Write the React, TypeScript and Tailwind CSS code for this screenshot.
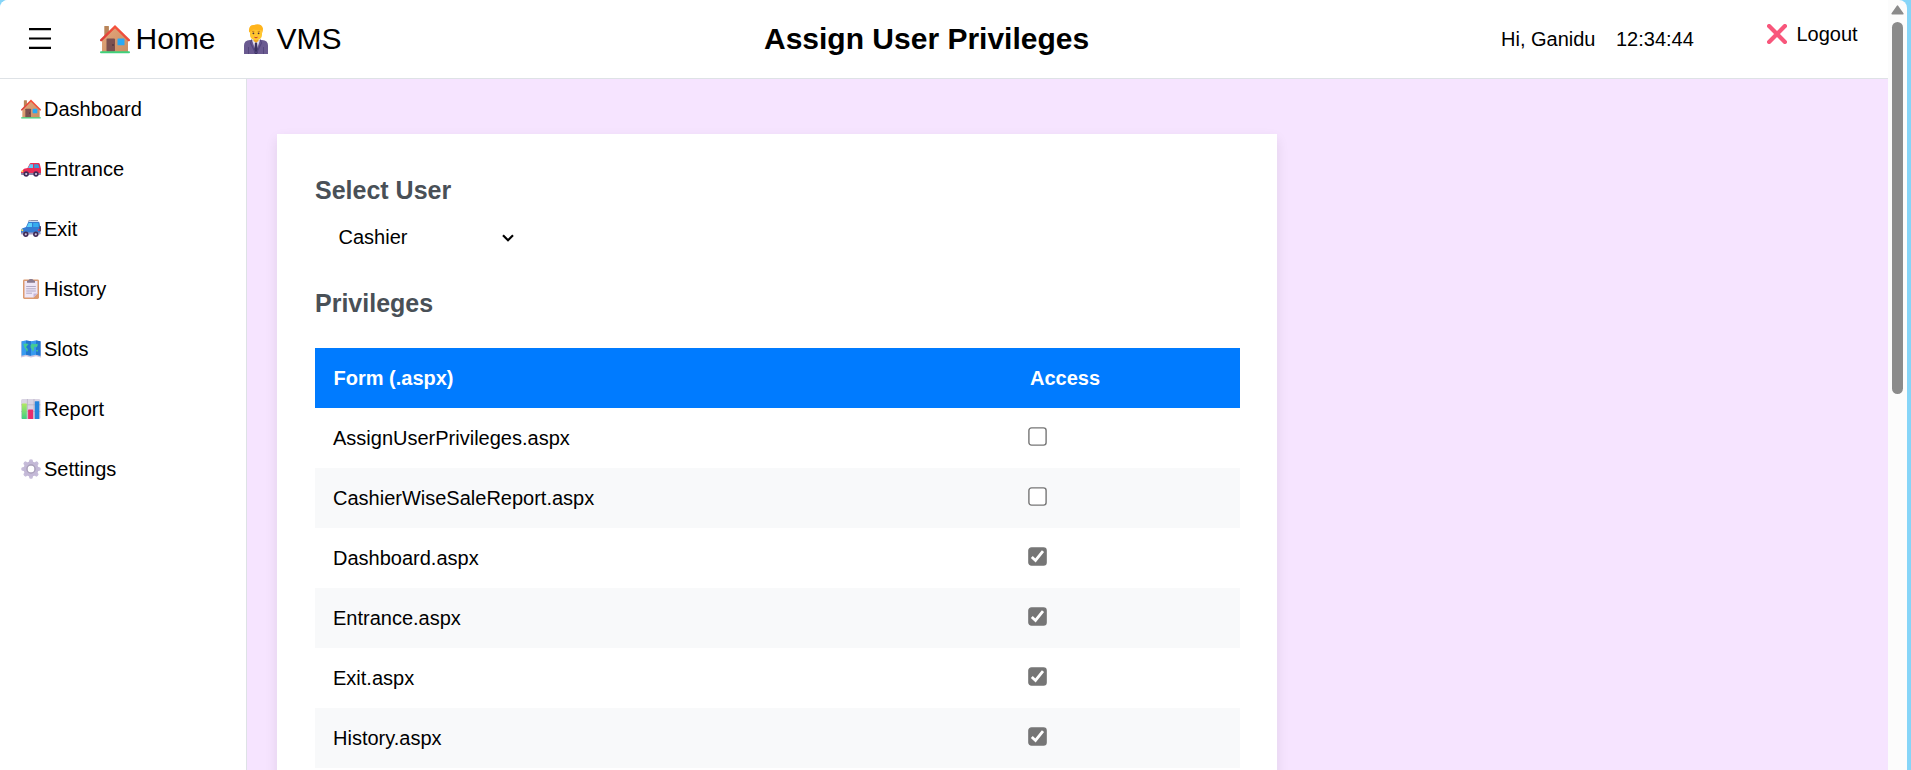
import type { ReactNode } from "react";

function House({ className }: { className: string }) {
  return (
    <svg viewBox="0 0 30 30" className={className}>
      <defs>
        <linearGradient id="wall" x1="0" y1="0" x2="1" y2="1">
          <stop offset="0" stopColor="#e5a77c" />
          <stop offset="1" stopColor="#c98e63" />
        </linearGradient>
        <linearGradient id="roof" x1="0" y1="1" x2="1" y2="0">
          <stop offset="0" stopColor="#d83c3a" />
          <stop offset="1" stopColor="#ff5a3d" />
        </linearGradient>
      </defs>
      <rect x="4.3" y="2" width="4.6" height="11" rx="0.6" fill="#b98559" />
      <path d="M2 15 15 3 28 15V28H2Z" fill="url(#wall)" />
      <path d="M1.2 16.2 15 2.6 28.8 16.2" fill="none" stroke="url(#roof)" strokeWidth="2.4" strokeLinecap="round" />
      <rect x="6.5" y="14.5" width="8.5" height="13" rx="1" fill="#7b5050" />
      <circle cx="13" cy="21" r="0.8" fill="#3d2630" />
      <rect x="17.5" y="14.5" width="7" height="6.8" rx="0.6" fill="#28a9f5" />
      <rect x="0" y="27.3" width="30" height="2" rx="1" fill="#3fd17b" />
    </svg>
  );
}

function OfficeWorker({ className }: { className: string }) {
  return (
    <svg viewBox="0 0 24 30" className={className}>
      <path d="M0 30V21.5Q0 16.3 6 16H18Q24 16.3 24 21.5V30Z" fill="#6a5a90" />
      <path d="M4.5 23V30M19.5 23V30" stroke="#51437a" strokeWidth="0.8" />
      <path d="M8 16 12 28 16 16Z" fill="#e3def0" />
      <path d="M11 18.5H13L14 27.5 13 30H11L10 27.5Z" fill="#3b3260" />
      <path d="M8 15.5 6.5 19 11.5 29M16 15.5 17.5 19 12.5 29" fill="none" stroke="#544680" strokeWidth="1.2" />
      <path d="M9.5 14H14.5V17L12 18.8 9.5 17Z" fill="#f2a71f" />
      <rect x="6" y="3.5" width="12" height="12.5" rx="5" fill="#ffc62e" />
      <path d="M5.2 8.5C4 3 7 .5 10 1 14-.8 18.5.8 19 4.5 19 6 18.6 8 18.2 9L17 6 9 5.6 6.8 7.5Z" fill="#ffb41c" />
      <path d="M8 7.4H10.3M13.7 7.4H16" stroke="#c7791c" strokeWidth="0.8" />
      <circle cx="9.4" cy="9.3" r="0.9" fill="#4b3040" />
      <circle cx="14.6" cy="9.3" r="0.9" fill="#4b3040" />
      <path d="M10.5 13.3Q12 14.3 13.5 13.3" stroke="#c0303a" strokeWidth="1" fill="none" />
    </svg>
  );
}

function RedCar() {
  return (
    <svg viewBox="0 0 20 20" className="size-5">
      <path d="M1 12 3 9.7 6.5 9 8.6 5Q9 4 10 4H17.5Q18.5 4 18.8 5L20 10V14.5Q20 15.5 19 15.5H1Q0 15.5 0 14.5V13Z" fill="#ea2c56" />
      <path d="M7 9 9 5.2H12V9Z" fill="#5ccbfa" />
      <path d="M13.2 5.2H17.2L18.5 9H13.2Z" fill="#3999d8" />
      <path d="M0 14H20V15Q20 16 19 16H1Q0 16 0 15Z" fill="#8c83a8" />
      <circle cx="1.3" cy="12.2" r="1" fill="#ffd54d" />
      <circle cx="5.2" cy="15" r="2.7" fill="#402b56" />
      <circle cx="5.2" cy="15" r="1.1" fill="#d5cce3" />
      <circle cx="15" cy="15" r="2.7" fill="#402b56" />
      <circle cx="15" cy="15" r="1.1" fill="#d5cce3" />
    </svg>
  );
}

function BlueCar() {
  return (
    <svg viewBox="0 0 20 20" className="size-5">
      <path d="M7 2.5Q8 1.3 9.5 1.5H17" fill="none" stroke="#8e92ab" strokeWidth="1" />
      <path d="M1 9.5 5 8 7 3.5Q7.3 2.7 8.2 2.7H17.3Q18.3 2.7 18.5 3.7L19.3 8V15H0V11Z" fill="#357bd2" />
      <path d="M5.8 8 7.7 4H11V8Z" fill="#5cd0fa" />
      <path d="M12.2 4H17.2L17.8 8H12.2Z" fill="#35acef" />
      <rect x="18.3" y="7" width="1.7" height="5.6" rx="0.8" fill="#514363" />
      <rect x="17.2" y="10" width="1.2" height="2" fill="#ed345b" />
      <rect x="0" y="13.5" width="19.5" height="2" rx="0.8" fill="#a69cc0" />
      <circle cx="1.3" cy="11.2" r="1" fill="#ffe34e" />
      <circle cx="4.8" cy="15.3" r="2.7" fill="#402b56" />
      <circle cx="4.8" cy="15.3" r="1.1" fill="#c9bfdc" />
      <circle cx="14.8" cy="15.3" r="2.7" fill="#402b56" />
      <circle cx="14.8" cy="15.3" r="1.1" fill="#c9bfdc" />
    </svg>
  );
}

function Clipboard() {
  return (
    <svg viewBox="0 0 20 20" className="size-5">
      <rect x="2" y="0.5" width="16" height="19.5" rx="1.4" fill="#dc9a70" />
      <path d="M3.5 2H16.5V14.5L12.5 18.5H3.5Z" fill="#eee6f7" />
      <path d="M16.5 14.5H12.5V18.5Z" fill="#c5b5d8" />
      <path d="M6 2.2Q6 1.2 7.5 1.2 8 0 10 0T12.5 1.2Q14 1.2 14 2.2V3.8H6Z" fill="#8a7a8f" />
      <path d="M5.2 7.5H14.8M5.2 9.8H14.8M5.2 12H14.8M5.2 14.2H11" stroke="#aaa0bd" strokeWidth="0.9" />
    </svg>
  );
}

function WorldMap() {
  return (
    <svg viewBox="0 0 20 20" className="size-5">
      <path d="M0 2.4 5 1.6 10 2.4 15 1.6 20 2.4V18.6L15 17.3 10 18.4 5 17.3 0 18.6Z" fill="#cfc6df" />
      <path d="M.6 2.2 5 1.5 10 2.3 15 1.5 19.4 2.2V16.8L15 15.8 10 16.8 5 15.8.6 16.8Z" fill="#379af0" />
      <path d="M5 1.5 10 2.3V16.8L5 15.8ZM15 1.5 19.4 2.2V16.8L15 15.8Z" fill="#2377cf" />
      <path d="M2 5 5 4.6 7.6 5 6.6 6.3 5.6 7.3 5.2 8.6 6.6 9.8 6.8 11.5 5.8 13 5 10.6 3.4 8.4 3 6.6ZM9.6 6 11.5 4.6 13 5.2 16.8 4.7 16.6 6.8 15.4 8.4 14.4 7.6 12.8 8.6 13 10.8 11.8 12.8 11 10 9.7 9Z" fill="#45cb92" />
      <path d="M15.2 11.2 16.8 10.8 16.8 12.4 15.5 12.6Z" fill="#45cb92" />
    </svg>
  );
}

function BarChart() {
  return (
    <svg viewBox="0 0 20 20" className="size-5">
      <defs>
        <linearGradient id="greenbar" x1="0" y1="0" x2="0" y2="1">
          <stop offset="0" stopColor="#b2e862" />
          <stop offset="1" stopColor="#42cf83" />
        </linearGradient>
      </defs>
      <rect width="19.5" height="20" rx="1.5" fill="#dad4e3" />
      <path d="M0 5.8H19.5M0 12.5H19.5M6.4 0V20M13 0V20" stroke="#b4adbf" strokeWidth="0.7" />
      <rect x="0.8" y="4.5" width="5" height="15.5" rx="0.5" fill="url(#greenbar)" />
      <rect x="7.1" y="10.5" width="5" height="9.5" rx="0.5" fill="#e82d6d" />
      <rect x="13.8" y="2.2" width="4.5" height="17.8" rx="0.5" fill="#2585dc" />
    </svg>
  );
}

const teeth = [0, 45, 90, 135, 180, 225, 270, 315];

function Gear() {
  return (
    <svg viewBox="0 0 20 20" className="size-5">
      {teeth.map((a) => (
        <path key={a} d="M7.6 4 8.4.8Q10-.3 11.6.8L12.4 4Z" fill="#c6bcd9" transform={`rotate(${a} 10 10)`} />
      ))}
      <circle cx="10" cy="10" r="5.4" fill="none" stroke="#c3b8d6" strokeWidth="4" />
      <circle cx="10" cy="10" r="4.1" fill="none" stroke="#a79eb6" strokeWidth="1.2" />
    </svg>
  );
}

const menu: [string, ReactNode][] = [
  ["Dashboard", <House className="size-5" />],
  ["Entrance", <RedCar />],
  ["Exit", <BlueCar />],
  ["History", <Clipboard />],
  ["Slots", <WorldMap />],
  ["Report", <BarChart />],
  ["Settings", <Gear />],
];

const forms: [string, boolean][] = [
  ["AssignUserPrivileges.aspx", false],
  ["CashierWiseSaleReport.aspx", false],
  ["Dashboard.aspx", true],
  ["Entrance.aspx", true],
  ["Exit.aspx", true],
  ["History.aspx", true],
];

function Checkbox({ checked }: { checked: boolean }) {
  return (
    <svg viewBox="0 0 19 19" className="size-[19px]" role="checkbox" aria-checked={checked}>
      <rect x="0.9" y="0.9" width="17.2" height="17.2" rx="2.6" fill={checked ? "#767676" : "#fff"} stroke="#767676" strokeWidth="1.4" />
      {checked && <path d="M3.8 10 7.5 13.5 15 4.2" fill="none" stroke="#fff" strokeWidth="2.8" />}
    </svg>
  );
}

export default function App() {
  return (
    <div className="flex h-[770px] w-[1911px] overflow-hidden bg-[#86d5f8] font-['Liberation_Sans',Arial,sans-serif] text-xl text-black">
      <div className="flex w-[1907px] overflow-hidden rounded-t-lg bg-[#fcfcfc]">
        <div className="flex w-[1888px] flex-col bg-white">
          <header className="flex h-[79px] shrink-0 items-center border-b border-[#dee2e6]">
            <svg viewBox="0 0 22 22" className="ml-[29px] size-[22px]">
              <path d="M0 1.2H22M0 10.5H22M0 19.8H22" stroke="#000" strokeWidth="2.2" />
            </svg>
            <div className="ml-[49px] flex w-[144px] items-center text-[30px]">
              <House className="mr-[5.5px] size-[30px] shrink-0" />
              <span>Home</span>
            </div>
            <div className="flex w-[520px] items-center text-[30px]">
              <OfficeWorker className="mr-[8.5px] h-[30px] w-6 shrink-0" />
              <span>VMS</span>
            </div>
            <h1 className="w-[737px] text-[30px] font-bold">Assign User Privileges</h1>
            <span className="w-[115px]">Hi, Ganidu</span>
            <span className="w-[151px]">12:34:44</span>
            <div className="mb-[11px] flex items-center">
              <svg viewBox="0 0 20 20" className="mr-[9.5px] size-5">
                <path d="M2.1 2.1 17.9 17.9M17.9 2.1 2.1 17.9" stroke="#f8567b" strokeWidth="4.2" strokeLinecap="round" />
              </svg>
              <span>Logout</span>
            </div>
          </header>
          <div className="flex min-h-0 flex-1">
            <nav className="flex w-[247px] shrink-0 flex-col border-r border-[#dee2e6]">
              {menu.map(([label, icon]) => (
                <a key={label} className="flex h-[60px] items-center gap-[3px] pl-[21px]">
                  {icon}
                  <span>{label}</span>
                </a>
              ))}
            </nav>
            <main className="flex-1 overflow-hidden bg-[#f6e4ff] pt-[55px] pl-[30px]">
              <section className="h-[900px] w-[1000px] bg-white px-[38px] pt-[41px] shadow-[0_5px_12px_rgba(0,0,0,0.09)]">
                <h2 className="h-[30px] text-[25px] leading-[30px] font-bold text-[#495057]">Select User</h2>
                <div className="mt-4 flex h-[32px] w-[199px] items-center justify-between pl-[23.5px]">
                  <span>Cashier</span>
                  <svg viewBox="0 0 12 8" className="mt-px h-2 w-3">
                    <path d="M1 1.2 6 6.2 11 1.2" fill="none" stroke="#000" strokeWidth="2.2" />
                  </svg>
                </div>
                <h2 className="mt-[35px] h-[30px] text-[25px] leading-[30px] font-bold text-[#495057]">Privileges</h2>
                <div className="mt-[30px] w-[925px]">
                  <div className="flex h-[60px] items-center bg-[#007bff] pl-[18.5px] font-bold text-white">
                    <span className="w-[696.5px]">Form (.aspx)</span>
                    <span>Access</span>
                  </div>
                  {forms.map(([name, checked]) => (
                    <div key={name} className="flex h-[60px] items-center pl-[18px] even:bg-white odd:bg-[#f8f9fa]">
                      <span className="w-[695px]">{name}</span>
                      <span className="mb-[3px]">
                        <Checkbox checked={checked} />
                      </span>
                    </div>
                  ))}
                </div>
              </section>
            </main>
          </div>
        </div>
        <div className="flex w-[19px] flex-col items-center">
          <svg viewBox="0 0 13 10" className="mt-[5px] h-2.5 w-[13px]">
            <path d="M6.5 1.2 11.8 8.8H1.2Z" fill="#8b8b8b" stroke="#8b8b8b" strokeWidth="1.6" strokeLinejoin="round" />
          </svg>
          <div className="mt-[7px] h-[372px] w-[11px] rounded-full bg-[#8b8b8b]" />
        </div>
      </div>
    </div>
  );
}
